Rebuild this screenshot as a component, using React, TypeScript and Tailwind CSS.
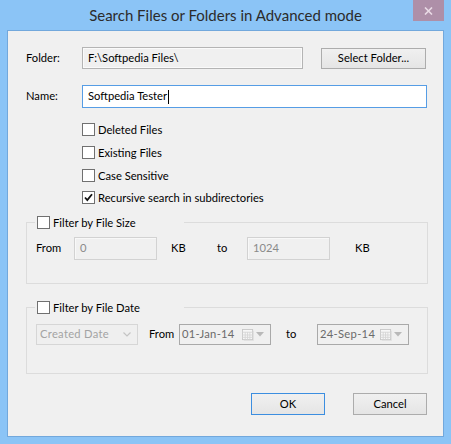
import React from "react";

function Check({ checked = false }: { checked?: boolean }) {
  return (
    <div className="w-[13px] h-[13px] border border-[#707070] bg-white flex items-center justify-center shrink-0">
      {checked && (
        <svg width="11" height="11" viewBox="0 0 11 11">
          <path d="M2 5.5 L4.3 8 L9 2.2" fill="none" stroke="#111" strokeWidth="1.8" />
        </svg>
      )}
    </div>
  );
}

function CalIcon() {
  return (
    <div className="flex items-center gap-[2px] shrink-0">
      <svg width="12" height="12" viewBox="0 0 13 13">
        <rect x="0.5" y="0.5" width="11" height="11" fill="#f7f7f7" stroke="#c8c8c8" />
        <path d="M0.5 3.5 H11.5 M0.5 6.5 H11.5 M0.5 9 H11.5 M3.5 3.5 V11.5 M6 3.5 V11.5 M8.5 3.5 V11.5" stroke="#d6d6d6" strokeWidth="1" />
        <path d="M12.5 2 V12.5 H2" fill="none" stroke="#e0e0e0" />
      </svg>
      <svg width="8" height="5" viewBox="0 0 8 5">
        <path d="M0 0 H8 L4 4.5 Z" fill="#b9b9b9" />
      </svg>
    </div>
  );
}

export default function App() {
  return (
    <div className="w-[451px] h-[444px] bg-[#8bc4f6] flex flex-col font-['Lato','Liberation_Sans',sans-serif] text-[11.2px] text-black whitespace-nowrap">
      <div className="h-[30px] relative flex items-center justify-center shrink-0">
        <span className="text-[15px] text-[#2b2b2b] mt-[1px]">
          Search Files or Folders in Advanced mode
        </span>
        <div className="absolute top-0 right-[7px] w-[31px] h-[21px] bg-[#ae8fa8] flex items-center justify-center">
          <svg width="9" height="8" viewBox="0 0 9 8">
            <path d="M1 0.5 L8 7.5 M8 0.5 L1 7.5" stroke="#eadbe6" strokeWidth="1.6" />
          </svg>
        </div>
      </div>
      <div className="mx-[7px] mb-[7px] flex-1 border border-[#72a8dc] bg-[#f0f0f0] flex flex-col">
        {/* Folder row */}
        <div className="flex items-start mt-[16px] pl-[18px] h-[22px]">
          <div className="w-[56px] h-[22px] flex items-center">Folder:</div>
          <div className="w-[221px] h-[22px] border border-[#b4b4b4] bg-[#f0f0f0] shadow-[inset_1px_1px_0_#fafafa,inset_-1px_-1px_0_#fafafa] flex items-center pl-[5px]">
            F:\Softpedia Files\
          </div>
          <div className="ml-[18px] mt-[1px] w-[105px] h-[21px] border border-[#acacac] bg-gradient-to-b from-[#f0f0f0] to-[#e5e5e5] flex items-center justify-center">
            Select Folder...
          </div>
        </div>
        {/* Name row */}
        <div className="flex items-start mt-[16px] pl-[18px] h-[23px]">
          <div className="w-[56px] h-[23px] flex items-center">Name:</div>
          <div className="w-[345px] h-[23px] border border-[#569de5] bg-white flex items-center pl-[5px]">
            Softpedia Tester
            <span className="inline-block w-[1px] h-[14px] bg-black ml-[1px]" />
          </div>
        </div>
        {/* checkboxes */}
        <div className="flex flex-col mt-[15px] pl-[74px]">
          <div className="h-[23px] flex items-start gap-[3px]">
            <Check />
            <span className="leading-[13px]">Deleted Files</span>
          </div>
          <div className="h-[23px] flex items-start gap-[3px]">
            <Check />
            <span className="leading-[13px]">Existing Files</span>
          </div>
          <div className="h-[22px] flex items-start gap-[3px]">
            <Check />
            <span className="leading-[13px]">Case Sensitive</span>
          </div>
          <div className="h-[13px] flex items-start gap-[3px]">
            <Check checked />
            <span className="leading-[13px]">Recursive search in subdirectories</span>
          </div>
        </div>
        {/* Group 1 */}
        <div className="mt-[18px] ml-[18px] w-[402px] h-[62px] border border-[#dcdcdc] flex flex-col">
          <div className="-mt-[7px] ml-[8px] w-[149px] h-[13px] pl-[2px] bg-[#f0f0f0] flex items-center gap-[3px]">
            <Check />
            <span className="leading-[13px]">Filter by File Size</span>
          </div>
          <div className="flex items-center mt-[8px] pl-[9px] h-[23px]">
            <span className="w-[38px]">From</span>
            <div className="w-[83px] h-[23px] border border-[#d2d2d2] bg-[#f0f0f0] shadow-[inset_1px_1px_0_#f8f8f8] flex items-center pl-[5px] text-[#8a8a8a]">
              0
            </div>
            <span className="ml-[14px] w-[46px]">KB</span>
            <span className="w-[30px]">to</span>
            <div className="w-[83px] h-[23px] border border-[#d2d2d2] bg-[#f0f0f0] shadow-[inset_1px_1px_0_#f8f8f8] flex items-center pl-[5px] text-[#8a8a8a]">
              1024
            </div>
            <span className="ml-[25px]">KB</span>
          </div>
        </div>
        {/* Group 2 */}
        <div className="mt-[23px] ml-[18px] w-[402px] h-[67px] border border-[#dcdcdc] flex flex-col">
          <div className="-mt-[7px] ml-[8px] w-[149px] h-[13px] pl-[2px] bg-[#f0f0f0] flex items-center gap-[3px]">
            <Check />
            <span className="leading-[13px]">Filter by File Date</span>
          </div>
          <div className="flex items-center mt-[10px] pl-[9px] h-[21px]">
            <div className="w-[102px] h-[21px] border border-[#d6d6d6] bg-[#efefef] flex items-center justify-between pl-[3px] pr-[6px] text-[#a3a3a3]">
              <span className="tracking-[0.3px]">Created Date</span>
              <svg width="8" height="5" viewBox="0 0 8 5">
                <path d="M0.5 0.5 L4 4 L7.5 0.5" fill="none" stroke="#c4c4c4" strokeWidth="1.2" />
              </svg>
            </div>
            <span className="ml-[11px] w-[30px]">From</span>
            <div className="w-[92px] h-[21px] border border-[#a9a9a9] bg-[#f0f0f0] flex items-center justify-between pl-[2px] pr-[6px] text-[#6b6b6b]">
              <span className="tracking-[0.3px]">01-Jan-14</span>
              <CalIcon />
            </div>
            <span className="ml-[15px] w-[31px]">to</span>
            <div className="w-[92px] h-[21px] border border-[#a9a9a9] bg-[#f0f0f0] flex items-center justify-between pl-[2px] pr-[6px] text-[#6b6b6b]">
              <span className="tracking-[0.3px]">24-Sep-14</span>
              <CalIcon />
            </div>
          </div>
        </div>
        {/* Buttons */}
        <div className="flex mt-[19px] ml-[243px] gap-[28px]">
          <div className="w-[74px] h-[22px] border border-[#3c8ee0] bg-gradient-to-b from-[#f0f0f0] to-[#e5e5e5] flex items-center justify-center">
            OK
          </div>
          <div className="w-[74px] h-[22px] border border-[#acacac] bg-gradient-to-b from-[#f0f0f0] to-[#e5e5e5] flex items-center justify-center">
            Cancel
          </div>
        </div>
      </div>
    </div>
  );
}
